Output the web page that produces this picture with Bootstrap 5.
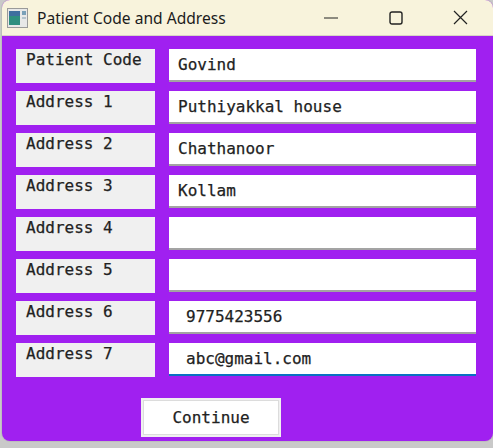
<!DOCTYPE html>
<html lang="en">
<head>
    <meta charset="UTF-8">
    <title>Patient Code and Address</title>
    <link href="https://cdn.jsdelivr.net/npm/bootstrap@5.3.2/dist/css/bootstrap.min.css" rel="stylesheet">
    <style>
        html, body { height: 448px; overflow: hidden; }
        body { background: #c9c9c9; }
        .app-window { width: 491px; height: 441px; margin-left: 2px; background: #a020f0; border-radius: 8px; overflow: hidden; box-shadow: 0 0 0 1px #bdbdbd; }
        .app-title { height: 36px; background: #f8f3dc; border-bottom: 1px solid #d8d4c4; font: 15.6px "Noto Sans", sans-serif; color: #1c1c1c; padding-left: 5px; }
        .app-icon { width: 21px; height: 20px; margin-right: 9px; }
        .win-btn { width: 65px; height: 35px; }
        .app-body { padding: 13px 15px 0 14px; font-family: "DejaVu Sans Mono", monospace; font-size: 16px; color: #222; -webkit-text-stroke: 0.25px #222; }
        .field-row { height: 34px; margin-bottom: 8px; gap: 14px; }
        .field-label { width: 139px; height: 34px; background: #f0f0f0; padding: 1px 0 0 10px; line-height: 20px; }
        .field-input { width: 307px; height: 33px; background: #fff; border: 0; border-bottom: 2px solid #a3a3a3; border-radius: 0; padding: 0 8px 0 9px; font: inherit; color: inherit; outline: 0; }
        .field-input.padded { padding-left: 17px; }
        .field-input.active { border-bottom-color: #0a6fc2; }
        .continue-btn { width: 140px; height: 39px; margin: 13px 0 0 125px; background: #fff; border: 2px solid #f0f0f0; box-shadow: inset 0 0 0 1px #dcdcdc; border-radius: 0; font: inherit; color: inherit; padding: 0; }
    </style>
</head>
<body class="m-0">
<div class="app-window">
    <div class="app-title d-flex align-items-center">
        <svg class="app-icon" viewBox="0 0 21 20">
            <rect x="0.5" y="0.5" width="20" height="19" fill="#e8e8e8" stroke="#9a9a9a"/>
            <rect x="2" y="3" width="11" height="14" fill="#2f8f7f"/>
            <rect x="2" y="3" width="11" height="5" fill="#3f6f9f"/>
            <rect x="15" y="3" width="4" height="4" fill="#7aa0b8"/>
            <rect x="15" y="9" width="4" height="2" fill="#b5c3cc"/>
        </svg>
        <span class="flex-grow-1">Patient Code and Address</span>
        <div class="win-btn d-flex align-items-center justify-content-center">
            <svg width="14" height="2" viewBox="0 0 14 2"><path d="M0 1H14" stroke="#222" stroke-width="1"/></svg>
        </div>
        <div class="win-btn d-flex align-items-center justify-content-center">
            <svg width="14" height="14" viewBox="0 0 14 14"><rect x="1" y="1" width="12" height="12" rx="2" fill="none" stroke="#222" stroke-width="1.4"/></svg>
        </div>
        <div class="win-btn d-flex align-items-center justify-content-center">
            <svg width="15" height="15" viewBox="0 0 15 15"><path d="M1 1L14 14M14 1L1 14" stroke="#222" stroke-width="1.2"/></svg>
        </div>
    </div>
    <form class="app-body">
        <div class="field-row d-flex"><div class="field-label">Patient Code</div><input class="field-input" type="text" value="Govind"></div>
        <div class="field-row d-flex"><div class="field-label">Address 1</div><input class="field-input" type="text" value="Puthiyakkal house"></div>
        <div class="field-row d-flex"><div class="field-label">Address 2</div><input class="field-input" type="text" value="Chathanoor"></div>
        <div class="field-row d-flex"><div class="field-label">Address 3</div><input class="field-input" type="text" value="Kollam"></div>
        <div class="field-row d-flex"><div class="field-label">Address 4</div><input class="field-input" type="text"></div>
        <div class="field-row d-flex"><div class="field-label">Address 5</div><input class="field-input" type="text"></div>
        <div class="field-row d-flex"><div class="field-label">Address 6</div><input class="field-input padded" type="text" value="9775423556"></div>
        <div class="field-row d-flex"><div class="field-label">Address 7</div><input class="field-input padded active" type="text" value="abc@gmail.com"></div>
        <button type="button" class="btn continue-btn">Continue</button>
    </form>
</div>
<script src="https://cdn.jsdelivr.net/npm/bootstrap@5.3.2/dist/js/bootstrap.bundle.min.js"></script>
</body>
</html>
